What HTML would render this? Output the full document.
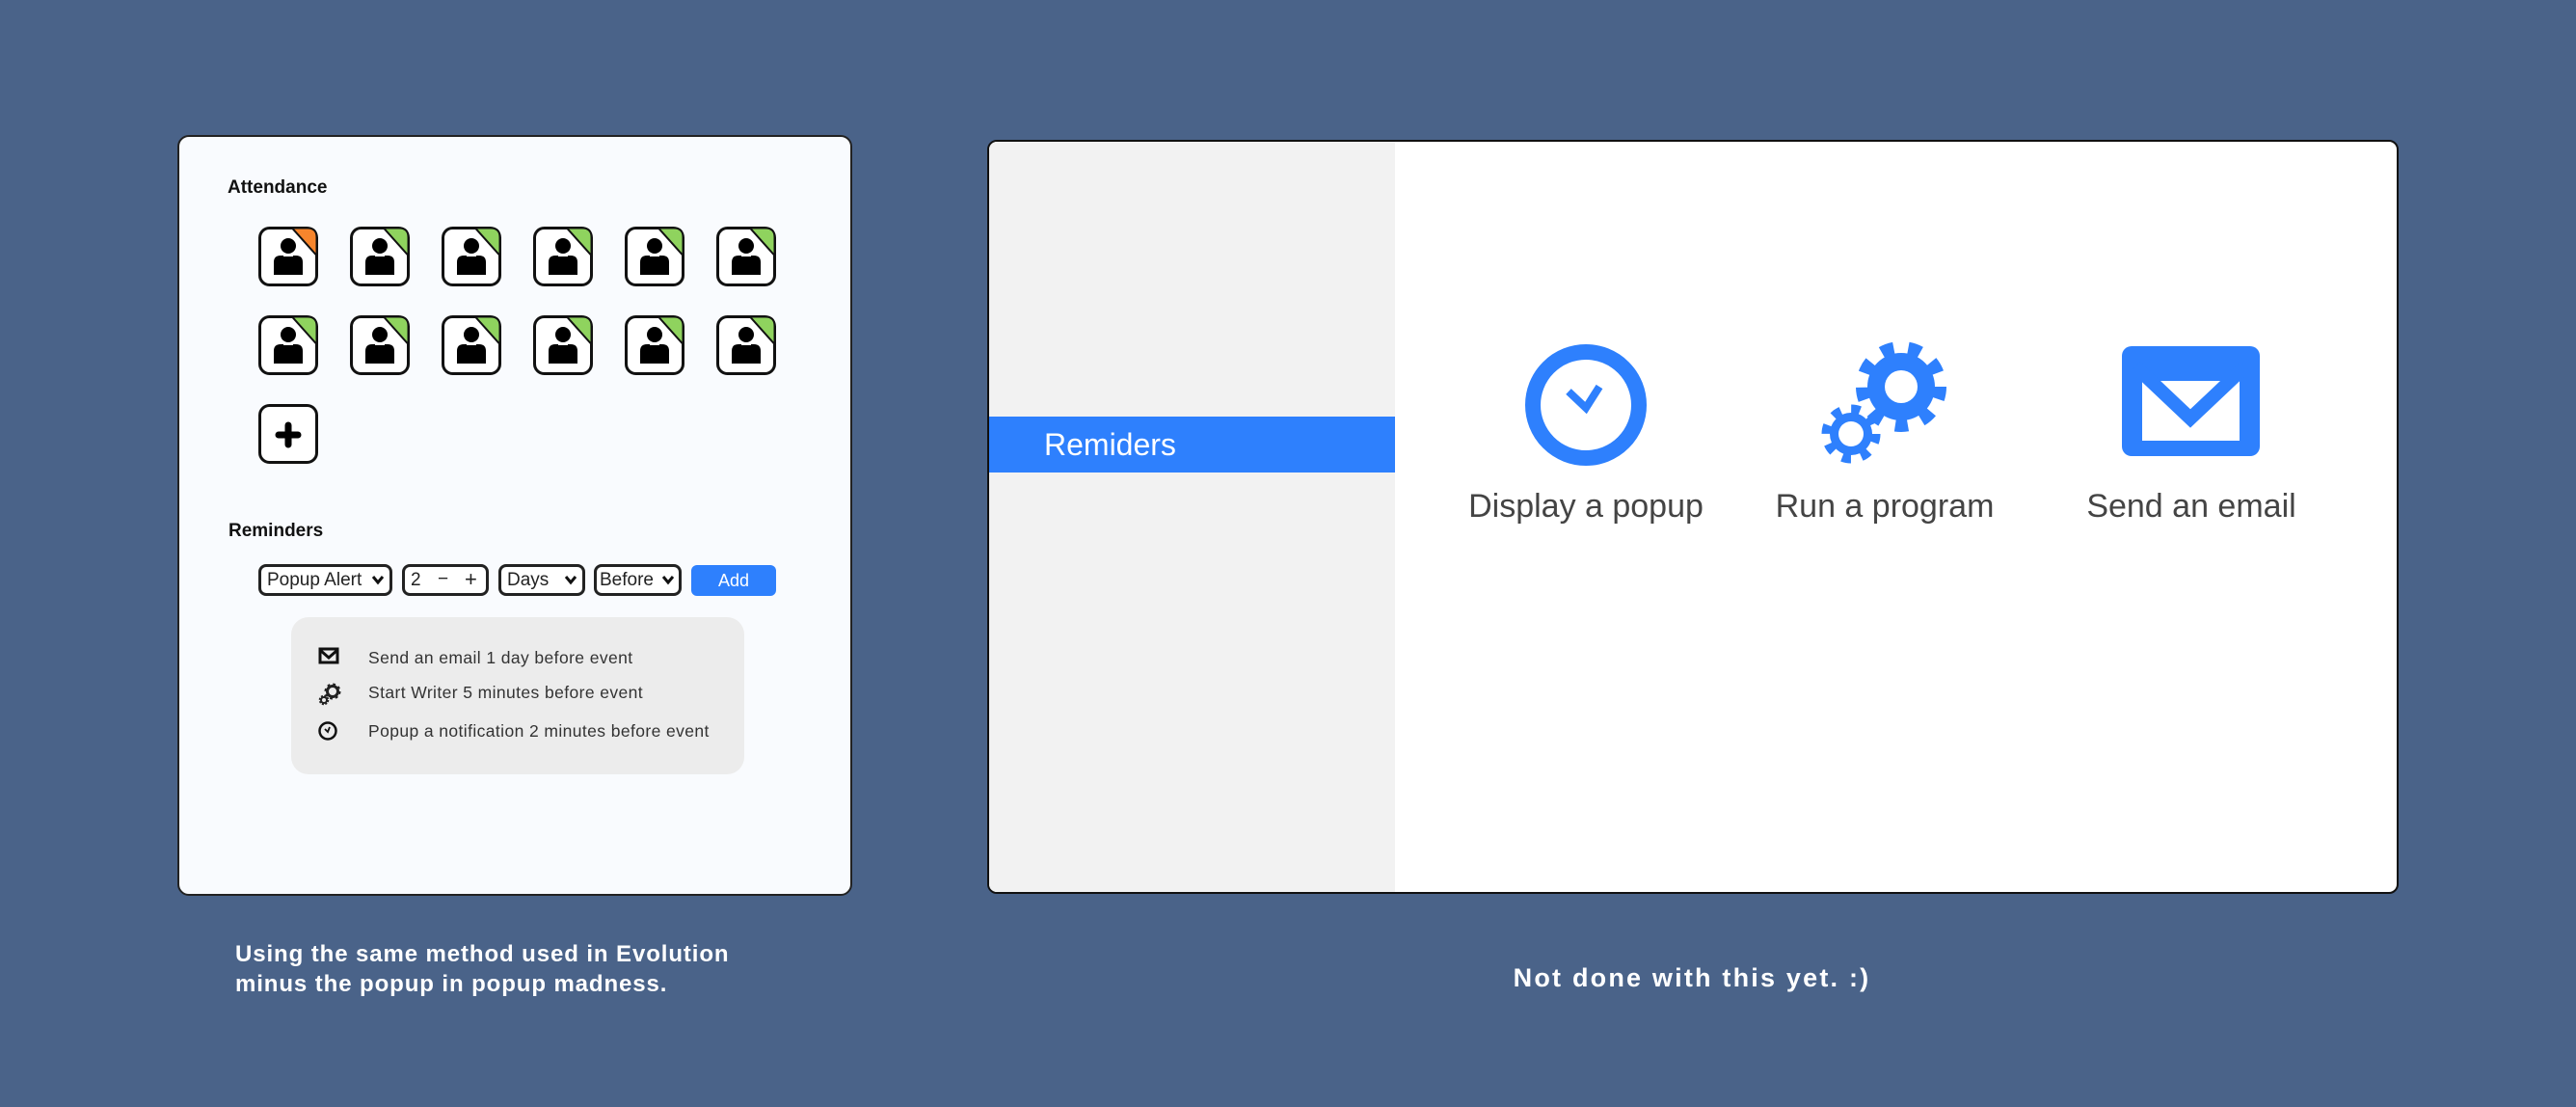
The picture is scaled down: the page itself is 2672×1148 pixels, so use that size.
<!DOCTYPE html>
<html><head><meta charset="utf-8"><style>
*{margin:0;padding:0;box-sizing:border-box}
body{width:2672px;height:1148px;background:#4a6389;position:relative;overflow:hidden;font-family:"Liberation Sans","DejaVu Sans",sans-serif}
.abs{position:absolute}
.lp{left:184px;top:140px;width:700px;height:789px;background:#f9fbfe;border:2px solid #222;border-radius:12px}
.h{font-weight:bold;font-size:19px;color:#111}
.ctl{position:absolute;top:585px;height:33px;border:3px solid #222;border-radius:8px;font-size:19px;color:#222;line-height:27px;padding-left:6px;background:#fff}
.li{position:absolute;left:382px;font-size:17.5px;color:#333;letter-spacing:0.4px}
.rp{left:1024px;top:145px;width:1464px;height:782px;background:#fff;border:2px solid #111;border-radius:10px;overflow:hidden}
.lab{position:absolute;top:506px;font-size:34px;color:#444;transform:translateX(-50%);white-space:nowrap}
.cap{color:#fff;font-weight:bold;font-size:24px}
</style></head><body>
<div class="abs lp"></div>
<div class="abs h" style="left:236px;top:184px">Attendance</div>
<svg class="abs" style="left:0;top:0" width="900" height="500">
<defs>
<g id="p"><rect x="1.5" y="1.5" width="59" height="59" rx="10" fill="#fff" stroke="#111" stroke-width="3"/>
<circle cx="31" cy="20" r="8" fill="#000"/><path d="M16 50V37q0-7 7-7h16q7 0 7 7v13z" fill="#000"/><rect x="26" y="28" width="10" height="3" fill="#fff"/></g>
</defs>
<g transform="translate(268,235)"><use href="#p"/><path d="M35 1.5H51q9.5 0 9.5 9.5V30z" fill="#f7852c" stroke="#111" stroke-width="2"/></g>
<g transform="translate(363,235)"><use href="#p"/><path d="M35 1.5H51q9.5 0 9.5 9.5V30z" fill="#8fd35e" stroke="#111" stroke-width="2"/></g>
<g transform="translate(458,235)"><use href="#p"/><path d="M35 1.5H51q9.5 0 9.5 9.5V30z" fill="#8fd35e" stroke="#111" stroke-width="2"/></g>
<g transform="translate(553,235)"><use href="#p"/><path d="M35 1.5H51q9.5 0 9.5 9.5V30z" fill="#8fd35e" stroke="#111" stroke-width="2"/></g>
<g transform="translate(648,235)"><use href="#p"/><path d="M35 1.5H51q9.5 0 9.5 9.5V30z" fill="#8fd35e" stroke="#111" stroke-width="2"/></g>
<g transform="translate(743,235)"><use href="#p"/><path d="M35 1.5H51q9.5 0 9.5 9.5V30z" fill="#8fd35e" stroke="#111" stroke-width="2"/></g>
<g transform="translate(268,327)"><use href="#p"/><path d="M35 1.5H51q9.5 0 9.5 9.5V30z" fill="#8fd35e" stroke="#111" stroke-width="2"/></g>
<g transform="translate(363,327)"><use href="#p"/><path d="M35 1.5H51q9.5 0 9.5 9.5V30z" fill="#8fd35e" stroke="#111" stroke-width="2"/></g>
<g transform="translate(458,327)"><use href="#p"/><path d="M35 1.5H51q9.5 0 9.5 9.5V30z" fill="#8fd35e" stroke="#111" stroke-width="2"/></g>
<g transform="translate(553,327)"><use href="#p"/><path d="M35 1.5H51q9.5 0 9.5 9.5V30z" fill="#8fd35e" stroke="#111" stroke-width="2"/></g>
<g transform="translate(648,327)"><use href="#p"/><path d="M35 1.5H51q9.5 0 9.5 9.5V30z" fill="#8fd35e" stroke="#111" stroke-width="2"/></g>
<g transform="translate(743,327)"><use href="#p"/><path d="M35 1.5H51q9.5 0 9.5 9.5V30z" fill="#8fd35e" stroke="#111" stroke-width="2"/></g>
<g transform="translate(268,419)"><rect x="1.5" y="1.5" width="59" height="59" rx="10" fill="#fff" stroke="#111" stroke-width="3"/><path d="M31 22v20M21 32h20" stroke="#000" stroke-width="7" stroke-linecap="round"/></g>
</svg>
<div class="abs h" style="left:237px;top:540px">Reminders</div>
<div class="ctl" style="left:268px;width:139px">Popup Alert<svg class="abs" style="right:5px;top:8px" width="14" height="11"><path d="M2 2l5 6 5-6" fill="none" stroke="#111" stroke-width="3"/></svg></div>
<div class="ctl" style="left:417px;width:90px">2<span class="abs" style="left:34px;top:-1px">−</span><span class="abs" style="left:62px;top:-1px;font-size:22px">+</span></div>
<div class="ctl" style="left:517px;width:90px">Days<svg class="abs" style="right:5px;top:8px" width="14" height="11"><path d="M2 2l5 6 5-6" fill="none" stroke="#111" stroke-width="3"/></svg></div>
<div class="ctl" style="left:616px;width:91px;padding-left:3px">Before<svg class="abs" style="right:4px;top:8px" width="14" height="11"><path d="M2 2l5 6 5-6" fill="none" stroke="#111" stroke-width="3"/></svg></div>
<div class="abs" style="left:717px;top:586px;width:88px;height:32px;background:#2e80fd;border-radius:6px;color:#fff;font-size:18px;text-align:center;line-height:32px">Add</div>
<div class="abs" style="left:302px;top:640px;width:470px;height:163px;background:#ececec;border-radius:18px"></div>
<svg class="abs" style="left:330px;top:670px" width="26" height="104">
<rect x="2" y="3" width="18" height="14" fill="none" stroke="#111" stroke-width="3"/><path d="M3 5l8 7 8-7" fill="none" stroke="#111" stroke-width="3"/>
<circle cx="15" cy="47" r="5.5" fill="none" stroke="#222" stroke-width="3"/><circle cx="15" cy="47" r="7" fill="none" stroke="#222" stroke-width="3" stroke-dasharray="2.6 2.9"/>
<circle cx="6" cy="56" r="3" fill="none" stroke="#222" stroke-width="2"/><circle cx="6" cy="56" r="4.3" fill="none" stroke="#222" stroke-width="2" stroke-dasharray="2 1.4"/>
<circle cx="10" cy="88" r="8.5" fill="none" stroke="#111" stroke-width="2.5"/><path d="M7 86l3 3 2-5" fill="none" stroke="#111" stroke-width="1.8"/>
</svg>
<div class="li" style="top:672px">Send an email 1 day before event</div>
<div class="li" style="top:708px">Start Writer 5 minutes before event</div>
<div class="li" style="top:748px">Popup a notification 2 minutes before event</div>

<div class="abs rp">
<div class="abs" style="left:0;top:0;width:421px;height:782px;background:#f2f2f2"></div>
<div class="abs" style="left:0;top:285px;width:421px;height:58px;background:#2e80fd;color:#fff;font-size:32px;line-height:58px;padding-left:57px">Remiders</div>
</div>
<svg class="abs" style="left:0;top:0" width="2672" height="600">
<circle cx="1645" cy="420" r="55" fill="none" stroke="#2e80fd" stroke-width="16"/>
<path d="M1627 406l18 17 14-22" fill="none" stroke="#2e80fd" stroke-width="8"/>
<g fill="#2e80fd">
<circle cx="1972" cy="401" r="35"/>
<circle cx="1972" cy="401" r="40" fill="none" stroke="#2e80fd" stroke-width="14" stroke-dasharray="13 14.93"/>
<circle cx="1920" cy="450" r="22"/>
<circle cx="1920" cy="450" r="25" fill="none" stroke="#2e80fd" stroke-width="11" stroke-dasharray="9 10.63"/>
</g>
<circle cx="1972" cy="401" r="17" fill="#fff"/>
<circle cx="1920" cy="450" r="13" fill="#fff"/>
<rect x="2201" y="359" width="143" height="114" rx="10" fill="#2e80fd"/>
<rect x="2222" y="395" width="101" height="62" fill="#fff"/>
<path d="M2215 380l57 54 57-54" fill="none" stroke="#2e80fd" stroke-width="14"/>
</svg>
<div class="lab" style="left:1645px">Display a popup</div>
<div class="lab" style="left:1955px">Run a program</div>
<div class="lab" style="left:2273px">Send an email</div>

<div class="abs cap" style="left:244px;top:974px;line-height:31px;letter-spacing:0.9px">Using the same method used in Evolution<br>minus the popup in popup madness.</div>
<div class="abs cap" style="left:1755px;top:999px;transform:translateX(-50%);white-space:nowrap;font-size:27px;letter-spacing:2.2px">Not done with this yet. :)</div>
</body></html>
